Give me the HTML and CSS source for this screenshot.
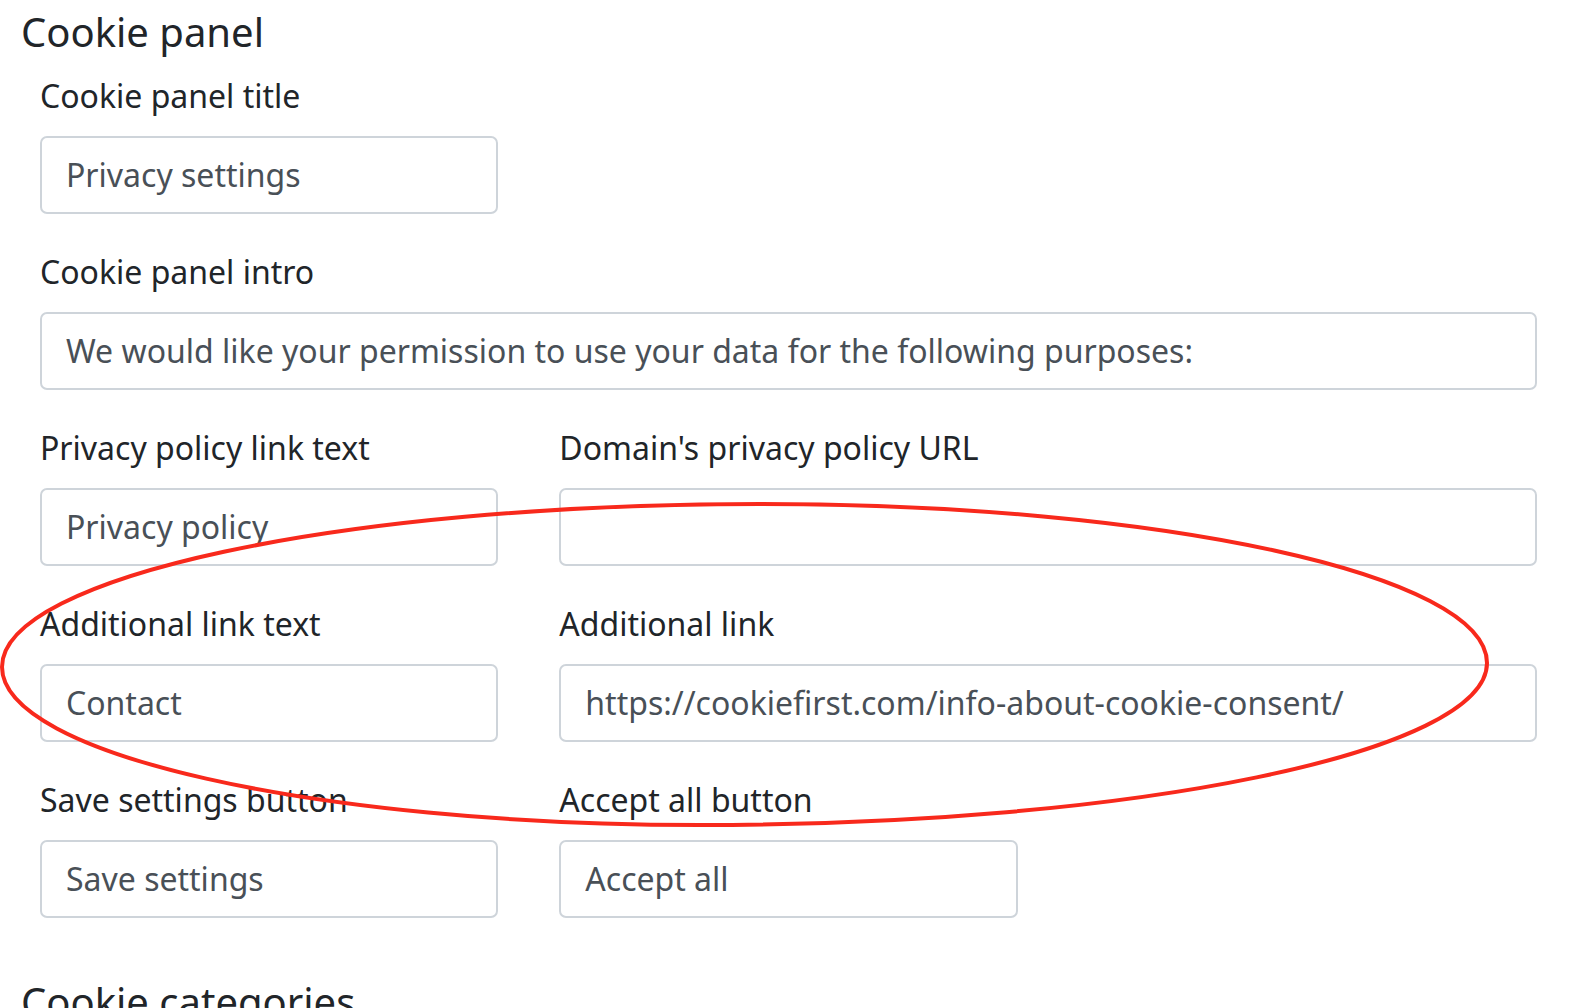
FILE: index.html
```html
<!DOCTYPE html>
<html lang="en">
<head>
<meta charset="utf-8">
<title>Cookie panel</title>
<link rel="stylesheet" href="styles.css">
</head>
<body>
<div class="page">
  <h2 class="section-title">Cookie panel</h2>
  <form class="form-grid">
    <div class="field span-1">
      <label class="field-label">Cookie panel title</label>
      <input class="field-input" type="text" value="Privacy settings">
    </div>
    <div class="field span-3">
      <label class="field-label">Cookie panel intro</label>
      <input class="field-input" type="text" value="We would like your permission to use your data for the following purposes:">
    </div>
    <div class="field span-1">
      <label class="field-label">Privacy policy link text</label>
      <input class="field-input" type="text" value="Privacy policy">
    </div>
    <div class="field span-2">
      <label class="field-label">Domain's privacy policy URL</label>
      <input class="field-input" type="text" value="">
    </div>
    <div class="field span-1">
      <label class="field-label">Additional link text</label>
      <input class="field-input" type="text" value="Contact">
    </div>
    <div class="field span-2">
      <label class="field-label">Additional link</label>
      <input class="field-input" type="text" value="https://cookiefirst.com/info-about-cookie-consent/">
    </div>
    <div class="field span-1">
      <label class="field-label">Save settings button</label>
      <input class="field-input" type="text" value="Save settings">
    </div>
    <div class="field span-1">
      <label class="field-label">Accept all button</label>
      <input class="field-input" type="text" value="Accept all">
    </div>
  </form>
  <h2 class="section-title next-section">Cookie categories</h2>

  <svg class="annotation" width="1588" height="1008" viewBox="0 0 1588 1008" aria-hidden="true">
    <path d="M2 667 C2 577 341 504 760 504 C1162 504 1487 575 1487 663 C1487 752 1135 825 700 825 C314 825 2 754 2 667 Z" fill="none" stroke="#f8291c" stroke-width="4"/>
  </svg>
</div>
</body>
</html>
```

FILE: styles.css
```css
html, body {
  margin: 0;
  padding: 0;
  background: #ffffff;
}

body {
  font-family: "Noto Sans", "Open Sans", sans-serif;
  color: #212529;
}

.page {
  position: relative;
  width: 1588px;
  height: 1008px;
  overflow: hidden;
  padding-top: 7.5px;
  box-sizing: border-box;
}

.section-title {
  margin: 0 0 16px 21px;
  font-size: 40px;
  font-weight: 400;
  line-height: 1.2;
  color: #212529;
}

.next-section {
  margin-top: 60px;
}

.form-grid {
  margin: 0 0 0 40px;
  width: 1497px;
  display: grid;
  grid-template-columns: repeat(3, 1fr);
  column-gap: 61px;
  row-gap: 34px;
}

.field {
  display: flex;
  flex-direction: column;
}

.span-1 { grid-column: span 1; }
.span-2 { grid-column: span 2; }
.span-3 { grid-column: span 3; }

.field-label {
  font-size: 32px;
  line-height: 1.5;
  margin-bottom: 16px;
  color: #212529;
}

.field-input {
  box-sizing: border-box;
  height: 78px;
  width: 100%;
  padding: 0 24px;
  border: 2px solid #ced4da;
  border-radius: 7px;
  background: #ffffff;
  font-family: "Noto Sans", "Open Sans", sans-serif;
  font-size: 32px;
  color: #495057;
  outline: none;
}

.annotation {
  position: absolute;
  left: 0;
  top: 0;
  pointer-events: none;
}
```
